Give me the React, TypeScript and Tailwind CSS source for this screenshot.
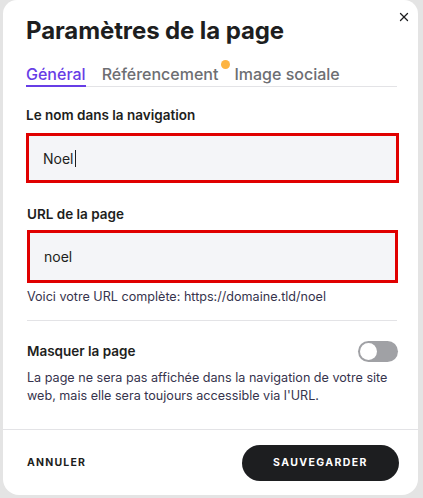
import { X } from "lucide-react";

const font = { fontFamily: "Inter, 'Liberation Sans', sans-serif" };

const Field = ({ label, value, caret, h }: { label: string; value: string; caret?: boolean; h: string }) => (
  <div className="flex flex-col">
    <div className="text-[13.5px] font-semibold text-[#1d1e20] leading-[20px]">{label}</div>
    <div className={`mt-[8px] ${h} border-[3px] border-[#e00000] bg-[#f4f5f8] flex items-center px-[14px] text-[14px] text-[#1d1e20]`}>
      {value}
      {caret && <span className="ml-[1px] inline-block w-[1px] h-[17px] bg-[#1d1e20]" />}
    </div>
  </div>
);

const App = () => {
  return (
    <div className="w-[423px] h-[498px] bg-[#e4e4e4] pl-[3px] pr-[5px] overflow-hidden" style={font}>
      <div className="h-[495px] bg-white rounded-b-[16px] rounded-t-[14px] flex flex-col">
        <div className="relative pl-[23px] pr-[19px] pt-[16px]">
          <h1 className="text-[24px] font-bold text-[#1d1e20] tracking-[-0.1px] leading-[30px]">
            Paramètres de la page
          </h1>
          <button className="absolute right-[7px] top-[10px] text-[#1d1e20]">
            <X size={14} strokeWidth={2.2} />
          </button>
          <div className="mt-[17px] mr-[2px] flex gap-[16px] border-b border-[#e3e3e6] text-[16px] font-medium leading-[22px]">
            <div className="text-[#673de6] border-b-2 border-[#673de6] pb-[0px] -mb-px">Général</div>
            <div className="relative text-[#6d6e72]">
              Référencement
              <span className="absolute -right-[12px] top-[-3px] w-[9px] h-[9px] rounded-full bg-[#fdb441]" />
            </div>
            <div className="text-[#6d6e72]">Image sociale</div>
          </div>
          <div className="mt-[18px]">
            <Field label="Le nom dans la navigation" value="Noel" caret h="h-[50px]" />
          </div>
          <div className="mt-[21px] pl-[1px] pr-[1px]">
            <div className="flex flex-col">
              <div className="text-[13.5px] font-semibold text-[#1d1e20] leading-[20px]">URL de la page</div>
              <div className="mt-[6px] h-[53px] border-[3px] border-[#e00000] bg-[#f4f5f8] flex items-center px-[14px] text-[14px] text-[#1d1e20]">
                noel
              </div>
            </div>
          </div>
          <div className="mt-[5px] pl-[1px] text-[12.6px] text-[#36344d] leading-[18px]">
            Voici votre URL complète: https://domaine.tld/noel
          </div>
          <div className="mt-[14px] ml-[1px] mr-[2px] border-t border-[#e3e3e6]" />
          <div className="mt-[20px] pl-[1px] pr-[1px] flex items-center justify-between">
            <div className="text-[13.5px] font-semibold text-[#1d1e20]">Masquer la page</div>
            <div className="w-[40px] h-[21px] rounded-full bg-[#a0a1a5] p-[2px] flex">
              <div className="w-[17px] h-[17px] rounded-full bg-white" />
            </div>
          </div>
          <div className="mt-[7px] pl-[1px] text-[12.6px] text-[#36344d] leading-[18px] pr-[2px]">
            La page ne sera pas affichée dans la navigation de votre site web, mais elle sera toujours accessible via l'URL.
          </div>
        </div>
        <div className="mt-auto border-t border-[#e3e3e6] h-[66px] pl-[24px] pr-[19px] flex items-center justify-between">
          <button className="text-[10.5px] font-bold tracking-[1.2px] text-[#1d1e20]">ANNULER</button>
          <button className="w-[157px] h-[36px] rounded-full bg-[#1d1e20] text-white text-[10.5px] font-bold tracking-[1.4px]">
            SAUVEGARDER
          </button>
        </div>
      </div>
    </div>
  );
};

export default App;
